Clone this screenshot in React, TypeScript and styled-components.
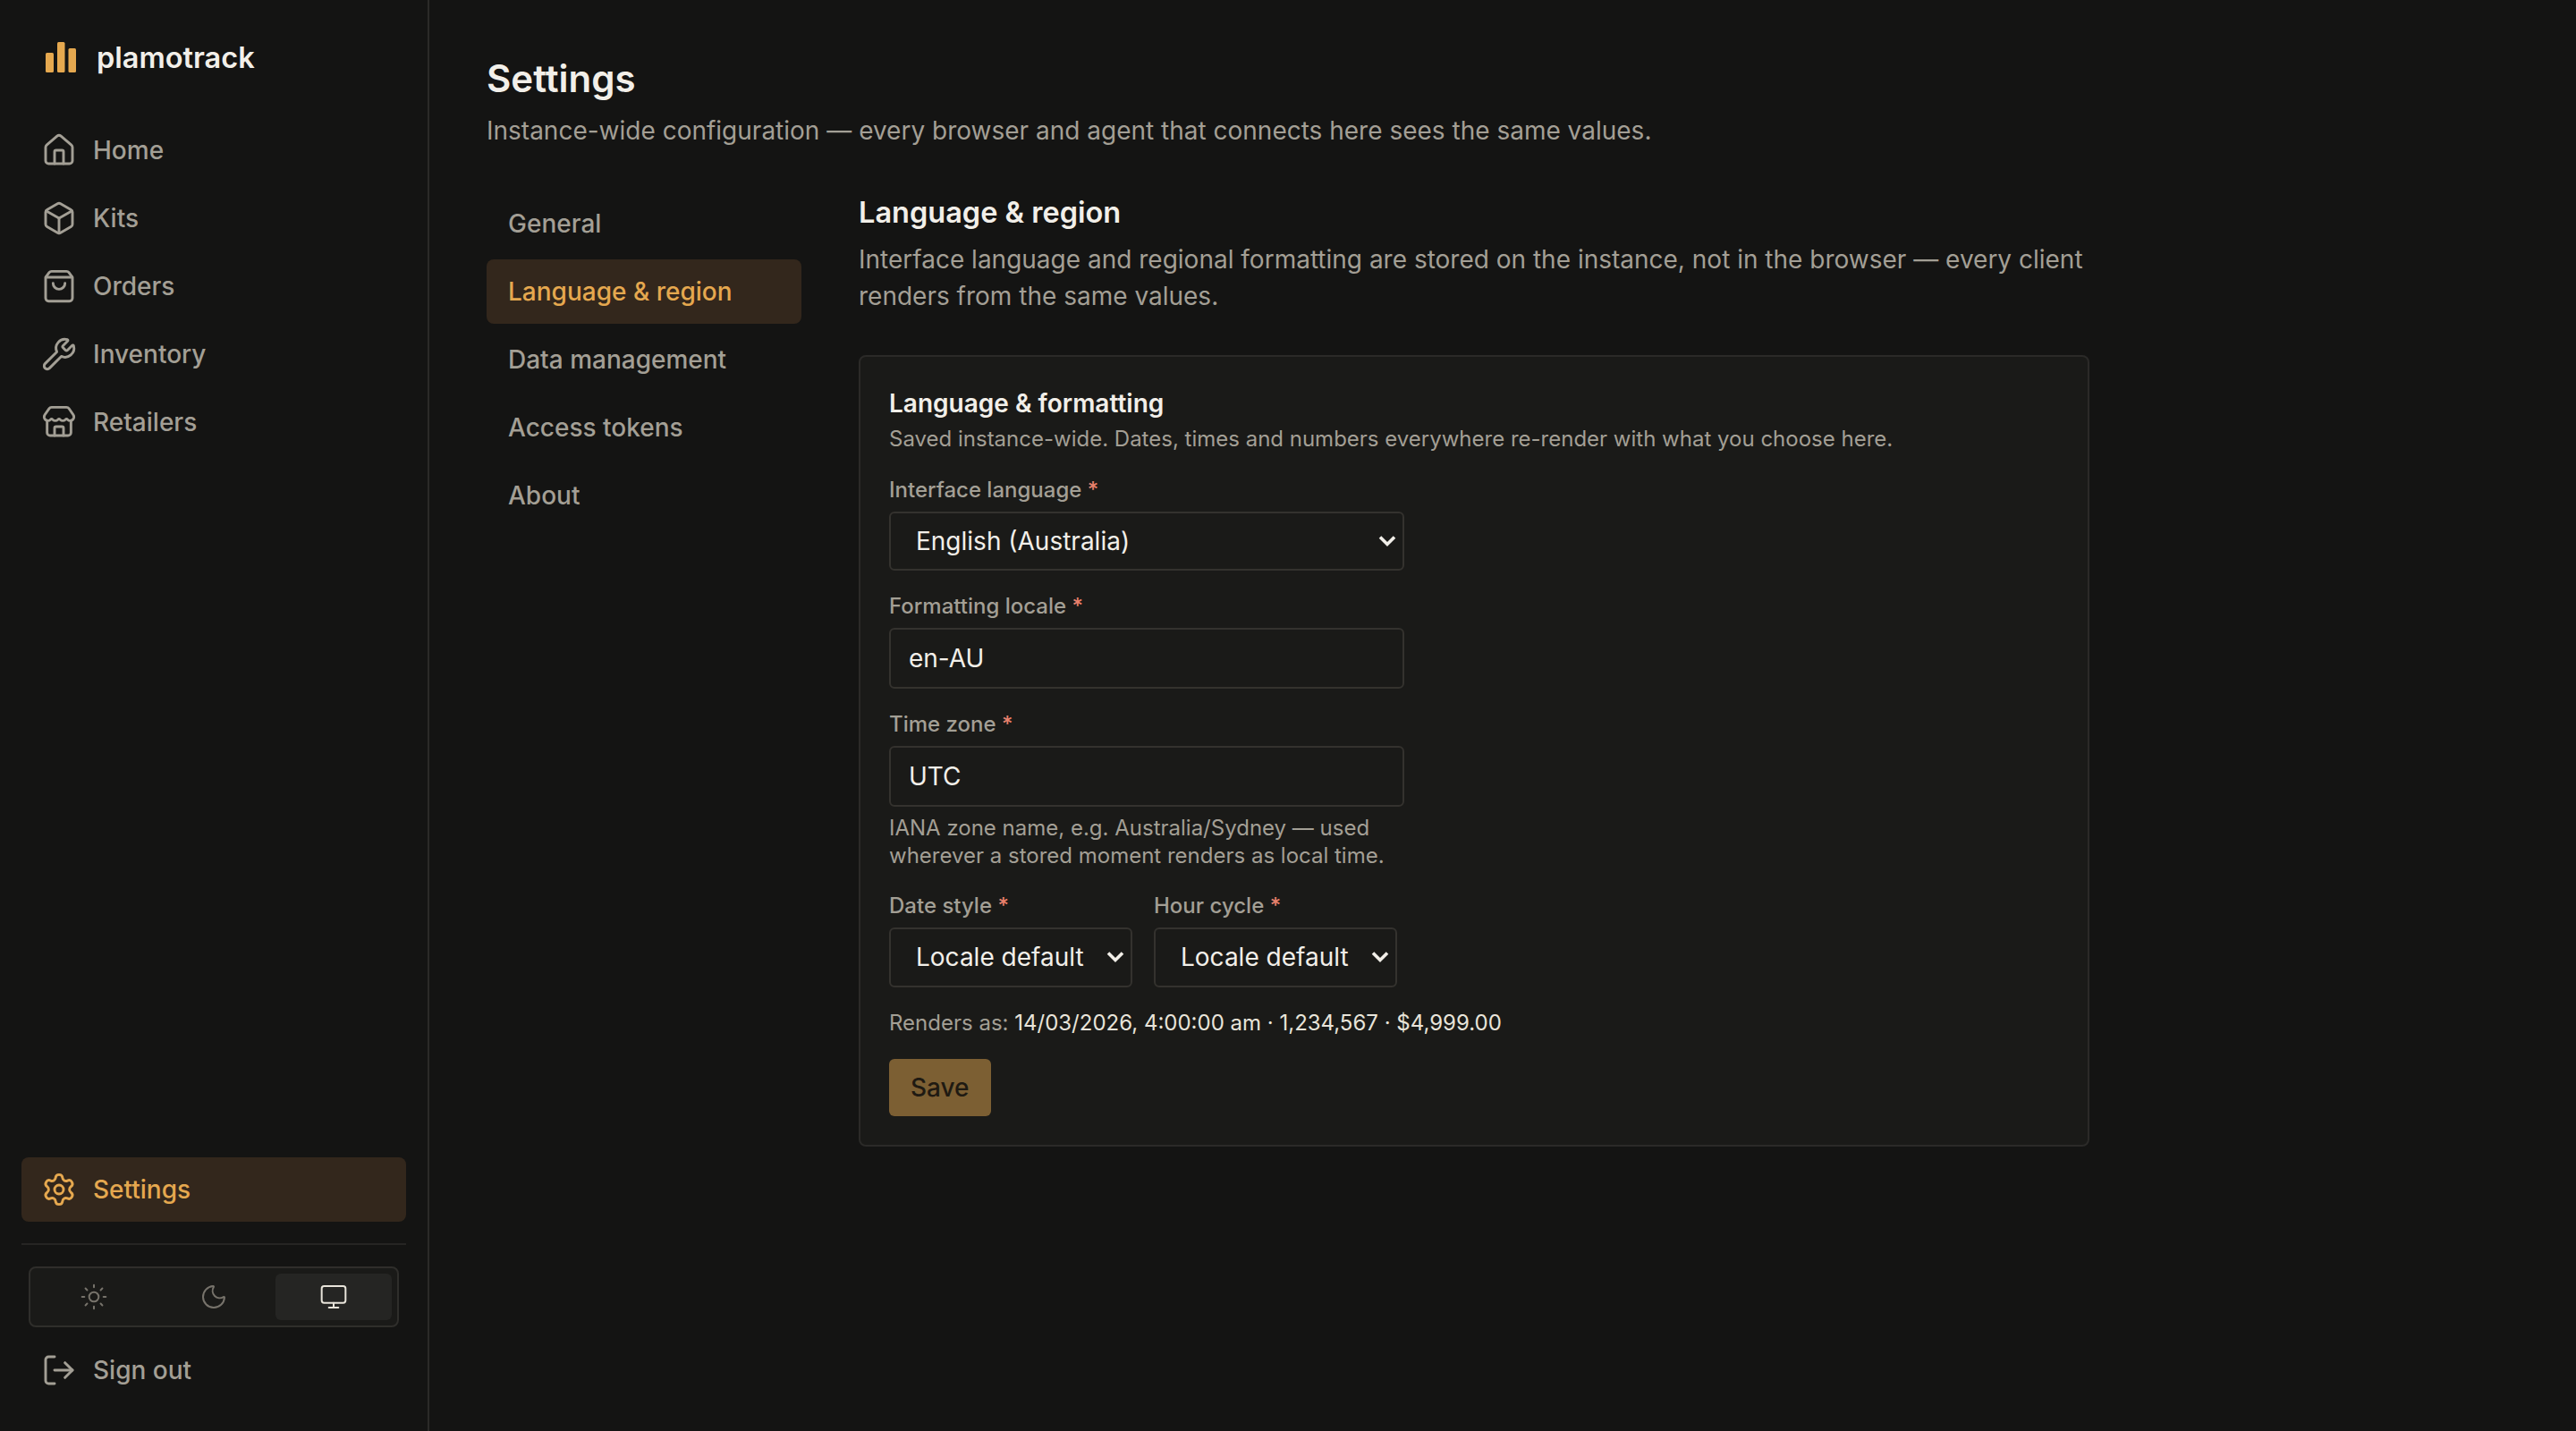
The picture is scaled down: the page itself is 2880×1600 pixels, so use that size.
import React from 'react';
import styled, { createGlobalStyle } from 'styled-components';
import { Box, House, LogOut, Monitor, Moon, Settings, ShoppingBag, Store, Sun, Wrench } from 'lucide-react';

// The design is a 1440x800 layout shown at double density
const GlobalStyle = createGlobalStyle`
  html {
    zoom: 2;
  }
  body {
    margin: 0;
    padding: 0;
    font-family: Inter, 'Noto Sans', sans-serif;
    background: #141413;
    color: #f2efe9;
    overflow: hidden;
  }
`;

const selectArrow =
  "data:image/svg+xml,%3Csvg xmlns='http://www.w3.org/2000/svg' width='10' height='7' viewBox='0 0 10 7'%3E%3Cpath d='M1 1.2 5 5.2 9 1.2' fill='none' stroke='%23f2efe9' stroke-width='1.8'/%3E%3C/svg%3E";

const Shell = styled.div`
  display: flex;
  height: 800px;
`;

const Sidebar = styled.aside`
  width: 240px;
  flex: none;
  box-sizing: border-box;
  display: flex;
  flex-direction: column;
  padding: 20px 12px 16px;
  border-right: 1px solid #2b2a28;
`;

const Brand = styled.div`
  display: flex;
  align-items: center;
  gap: 11.5px;
  height: 24px;
  padding-left: 13.5px;
  margin-bottom: 22px;
  font-size: 16.25px;
  font-weight: 600;
  color: #f2efe9;
`;

const NavList = styled.nav`
  display: flex;
  flex-direction: column;
  gap: 2px;
`;

const NavItem = styled.a<{ $active?: boolean }>`
  display: flex;
  align-items: center;
  gap: 9px;
  height: 36px;
  padding: 0 11px;
  border-radius: 4px;
  font-size: 14px;
  font-weight: 500;
  color: ${(p) => (p.$active ? '#e5a84f' : '#a39f95')};
  background: ${(p) => (p.$active ? '#33271c' : 'transparent')};
`;

const SidebarFooter = styled.div`
  margin-top: auto;
  display: flex;
  flex-direction: column;
`;

const Divider = styled.div`
  height: 1px;
  margin: 12px 0;
  background: #262523;
`;

const ThemeToggle = styled.div`
  display: flex;
  gap: 2px;
  margin: 0 4px 6px;
  padding: 3px;
  border: 1px solid #2f2e2b;
  border-radius: 4px;
  background: #1a1a18;
`;

const ThemeButton = styled.button<{ $active?: boolean }>`
  flex: 1;
  height: 26px;
  display: flex;
  align-items: center;
  justify-content: center;
  padding: 0;
  border: 0;
  border-radius: 3px;
  color: ${(p) => (p.$active ? '#e8e4da' : '#77736b')};
  background: ${(p) => (p.$active ? '#252523' : 'transparent')};
`;

const Main = styled.main`
  flex: 1;
  min-width: 0;
  padding: 28px 32px;
`;

const Content = styled.div`
  max-width: 896px;
`;

const PageTitle = styled.h1`
  margin: 0;
  font-size: 21px;
  line-height: 32px;
  font-weight: 600;
`;

const PageLead = styled.p`
  margin: 2px 0 0;
  font-size: 14px;
  line-height: 22px;
  color: #a39f95;
`;

const Columns = styled.div`
  display: flex;
  gap: 32px;
  margin-top: 23px;
`;

const SubNav = styled.nav`
  width: 176px;
  flex: none;
  display: flex;
  flex-direction: column;
  gap: 2px;
`;

const SubNavItem = styled.a<{ $active?: boolean }>`
  display: flex;
  align-items: center;
  height: 36px;
  padding: 0 12px;
  border-radius: 4px;
  font-size: 14px;
  font-weight: 500;
  color: ${(p) => (p.$active ? '#e5a84f' : '#a39f95')};
  background: ${(p) => (p.$active ? '#33271c' : 'transparent')};
`;

const Section = styled.section`
  flex: 1;
  min-width: 0;
`;

const SectionTitle = styled.h2`
  margin: 0;
  font-size: 16.25px;
  line-height: 24px;
  font-weight: 600;
`;

const SectionLead = styled.p`
  margin: 4px 0 0;
  font-size: 14px;
  line-height: 20.25px;
  color: #a39f95;
`;

const Card = styled.form`
  margin-top: 23px;
  display: flex;
  flex-direction: column;
  gap: 12px;
  padding: 16px;
  border: 1px solid #2b2a28;
  border-radius: 4px;
  background: #1a1a18;
`;

const CardHead = styled.div`
  display: flex;
  flex-direction: column;
  margin-bottom: -0.75px;
`;

const CardTitle = styled.h3`
  margin: 0;
  font-size: 14px;
  line-height: 20px;
  font-weight: 600;
`;

const CardLead = styled.p`
  margin: 1px 0 0;
  font-size: 12px;
  line-height: 18px;
  color: #a39f95;
`;

const Field = styled.label`
  display: flex;
  flex-direction: column;
  gap: 4px;
`;

const FieldLabel = styled.span`
  font-size: 12px;
  font-weight: 500;
  line-height: 16px;
  color: #a39f95;
`;

const Required = styled.span`
  color: #e8806c;
`;

const TextInput = styled.input`
  box-sizing: border-box;
  width: 288px;
  height: 34px;
  padding: 0 10px;
  border: 1px solid #34322e;
  border-radius: 3px;
  font: inherit;
  font-size: 14px;
  color: #f2efe9;
  background: #1a1a18;
  outline: none;
`;

const Select = styled.select<{ $wide?: boolean }>`
  box-sizing: border-box;
  appearance: none;
  width: ${(p) => (p.$wide ? '288px' : 'auto')};
  height: ${(p) => (p.$wide ? '33px' : '33.5px')};
  padding: 0 26px 0 14px;
  border: 1px solid #34322e;
  border-radius: 3px;
  font: inherit;
  font-size: 14px;
  color: #f2efe9;
  background: #1a1a18 url("${selectArrow}") no-repeat right 3.5px center;
  outline: none;
`;

const Hint = styled.p`
  margin: 0;
  width: 288px;
  font-size: 12px;
  line-height: 15.75px;
  color: #a39f95;
`;

const Row = styled.div`
  display: flex;
  gap: 12px;
`;

const Preview = styled.p`
  margin: 0;
  font-size: 12px;
  line-height: 16px;
  color: #a39f95;
`;

const PreviewValue = styled.span`
  color: #e8e4da;
`;

const SaveButton = styled.button`
  align-self: flex-start;
  height: 32px;
  padding: 0 12px;
  border: 0;
  border-radius: 3px;
  font: inherit;
  font-size: 14px;
  font-weight: 500;
  color: #1f1a12;
  background: #7c5f33;
`;

const fieldGroup = (text: string) => (
  <FieldLabel>
    {text} <Required>*</Required>
  </FieldLabel>
);

const BrandMark = () => (
  <svg width="17" height="17" viewBox="0 0 34 34" fill="#e5a84f" aria-hidden>
    <rect x="0" y="12" width="9" height="22" rx="1.5" />
    <rect x="13" y="0" width="8.5" height="34" rx="1.5" />
    <rect x="25.5" y="7" width="8.5" height="27" rx="1.5" />
  </svg>
);

const navLinks = [
  { label: 'Home', icon: House },
  { label: 'Kits', icon: Box },
  { label: 'Orders', icon: ShoppingBag },
  { label: 'Inventory', icon: Wrench },
  { label: 'Retailers', icon: Store },
];

const sections = ['General', 'Language & region', 'Data management', 'Access tokens', 'About'];

function App() {
  return (
    <>
      <GlobalStyle />
      <Shell>
        <Sidebar>
          <Brand>
            <BrandMark />
            plamotrack
          </Brand>
          <NavList>
            {navLinks.map(({ label, icon: Icon }) => (
              <NavItem key={label}>
                <Icon size={20} strokeWidth={1.75} />
                {label}
              </NavItem>
            ))}
          </NavList>
          <SidebarFooter>
            <NavItem $active>
              <Settings size={20} strokeWidth={1.75} />
              Settings
            </NavItem>
            <Divider />
            <ThemeToggle>
              <ThemeButton type="button">
                <Sun size={16} strokeWidth={1.5} />
              </ThemeButton>
              <ThemeButton type="button">
                <Moon size={16} strokeWidth={1.5} />
              </ThemeButton>
              <ThemeButton type="button" $active>
                <Monitor size={16} strokeWidth={1.5} />
              </ThemeButton>
            </ThemeToggle>
            <NavItem>
              <LogOut size={20} strokeWidth={1.75} />
              Sign out
            </NavItem>
          </SidebarFooter>
        </Sidebar>

        <Main>
          <Content>
            <PageTitle>Settings</PageTitle>
            <PageLead>
              Instance-wide configuration — every browser and agent that connects here sees the same values.
            </PageLead>
            <Columns>
              <SubNav>
                {sections.map((s) => (
                  <SubNavItem key={s} $active={s === 'Language & region'}>
                    {s}
                  </SubNavItem>
                ))}
              </SubNav>
              <Section>
                <SectionTitle>Language &amp; region</SectionTitle>
                <SectionLead>
                  Interface language and regional formatting are stored on the instance, not in the browser — every
                  client renders from the same values.
                </SectionLead>
                <Card onSubmit={(e) => e.preventDefault()}>
                  <CardHead>
                    <CardTitle>Language &amp; formatting</CardTitle>
                    <CardLead>
                      Saved instance-wide. Dates, times and numbers everywhere re-render with what you choose here.
                    </CardLead>
                  </CardHead>
                  <Field>
                    {fieldGroup('Interface language')}
                    <Select $wide defaultValue="en-AU">
                      <option value="en-AU">English (Australia)</option>
                    </Select>
                  </Field>
                  <Field>
                    {fieldGroup('Formatting locale')}
                    <TextInput defaultValue="en-AU" />
                  </Field>
                  <Field>
                    {fieldGroup('Time zone')}
                    <TextInput defaultValue="UTC" />
                    <Hint>IANA zone name, e.g. Australia/Sydney — used wherever a stored moment renders as local time.</Hint>
                  </Field>
                  <Row>
                    <Field>
                      {fieldGroup('Date style')}
                      <Select defaultValue="default">
                        <option value="default">Locale default</option>
                      </Select>
                    </Field>
                    <Field>
                      {fieldGroup('Hour cycle')}
                      <Select defaultValue="default">
                        <option value="default">Locale default</option>
                      </Select>
                    </Field>
                  </Row>
                  <Preview>
                    Renders as: <PreviewValue>14/03/2026, 4:00:00 am · 1,234,567 · $4,999.00</PreviewValue>
                  </Preview>
                  <SaveButton type="submit">Save</SaveButton>
                </Card>
              </Section>
            </Columns>
          </Content>
        </Main>
      </Shell>
    </>
  );
}

export default App;
